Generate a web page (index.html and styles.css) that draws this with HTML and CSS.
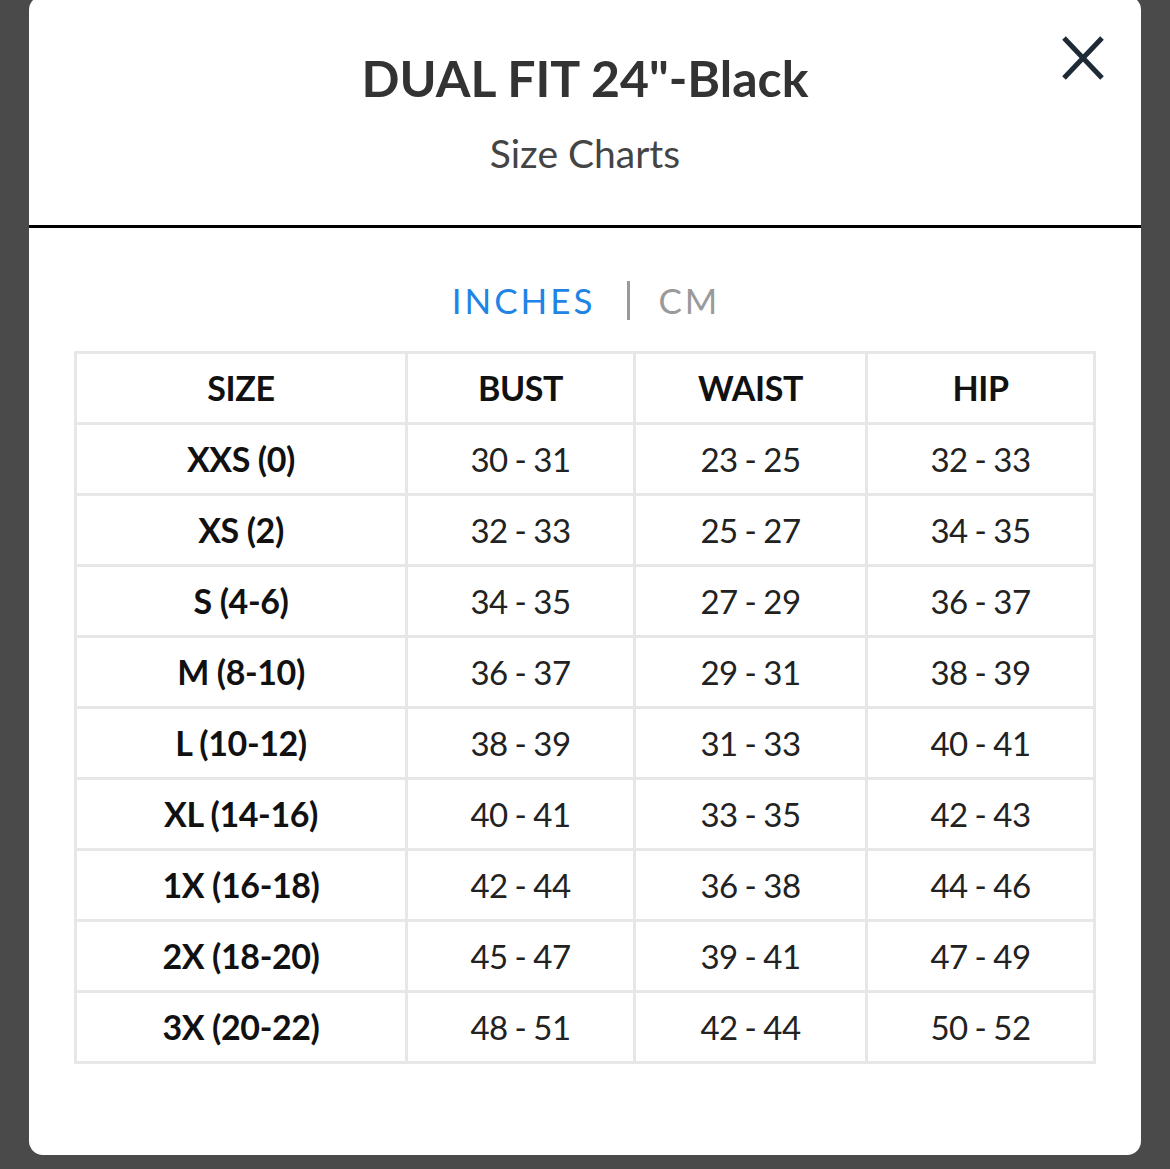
FILE: index.html
```html
<!DOCTYPE html>
<html lang="en">
<head>
<meta charset="utf-8">
<title>Size Charts</title>
<link rel="stylesheet" href="styles.css">
</head>
<body>
<div class="modal">
  <button class="close" aria-label="Close">
    <svg width="42" height="44" viewBox="0 0 42 44"><path d="M2 2 L40 42 M40 2 L2 42" stroke="#1f2a37" stroke-width="5" fill="none"/></svg>
  </button>
  <header class="modal-head">
    <h1 class="title">DUAL FIT 24"-Black</h1>
    <p class="subtitle">Size Charts</p>
  </header>
  <div class="modal-body">
    <div class="units">
      <span class="unit active">INCHES</span>
      <span class="sep"></span>
      <span class="unit">CM</span>
    </div>
    <table class="chart">
      <colgroup>
        <col class="c-size"><col class="c-bust"><col class="c-waist"><col class="c-hip">
      </colgroup>
      <thead>
        <tr><th>SIZE</th><th>BUST</th><th>WAIST</th><th>HIP</th></tr>
      </thead>
      <tbody>
        <tr><th>XXS (0)</th><td>30 - 31</td><td>23 - 25</td><td>32 - 33</td></tr>
        <tr><th>XS (2)</th><td>32 - 33</td><td>25 - 27</td><td>34 - 35</td></tr>
        <tr><th>S (4-6)</th><td>34 - 35</td><td>27 - 29</td><td>36 - 37</td></tr>
        <tr><th>M (8-10)</th><td>36 - 37</td><td>29 - 31</td><td>38 - 39</td></tr>
        <tr><th>L (10-12)</th><td>38 - 39</td><td>31 - 33</td><td>40 - 41</td></tr>
        <tr><th>XL (14-16)</th><td>40 - 41</td><td>33 - 35</td><td>42 - 43</td></tr>
        <tr><th>1X (16-18)</th><td>42 - 44</td><td>36 - 38</td><td>44 - 46</td></tr>
        <tr><th>2X (18-20)</th><td>45 - 47</td><td>39 - 41</td><td>47 - 49</td></tr>
        <tr><th>3X (20-22)</th><td>48 - 51</td><td>42 - 44</td><td>50 - 52</td></tr>
      </tbody>
    </table>
  </div>
</div>
</body>
</html>
```

FILE: styles.css
```css
html, body {
  margin: 0;
  padding: 0;
  background: #4a4a4a;
  height: 1169px;
  overflow: hidden;
}
body {
  font-family: Lato, "Open Sans", sans-serif;
}
.modal {
  position: relative;
  box-sizing: border-box;
  width: 1112px;
  height: 1159px;
  margin: -4px 0 0 29px;
  background: #fff;
  border-radius: 14px;
}
.close {
  position: absolute;
  top: 40px;
  right: 37px;
  padding: 0;
  border: 0;
  background: none;
  line-height: 0;
}
.modal-head {
  padding: 53px 0 48px;
  border-bottom: 3px solid #000;
  text-align: center;
}
.title {
  margin: 0;
  font-size: 50px;
  line-height: 58px;
  font-weight: 700;
  color: #333;
}
.subtitle {
  margin: 22px 0 0;
  font-size: 39px;
  line-height: 48px;
  font-weight: 400;
  color: #444;
}
.modal-body {
  padding: 52px 45px 0;
}
.units {
  display: flex;
  justify-content: center;
  align-items: center;
  height: 40px;
  margin-left: 2px;
}
.unit {
  font-size: 35px;
  line-height: 40px;
  letter-spacing: 3px;
  color: #9a9a9a;
}
.unit.active {
  color: #1e84e6;
}
.sep {
  width: 3px;
  height: 39px;
  background: #999;
  margin: 0 28px 0 32px;
}
.chart {
  margin-top: 31px;
  width: 1022px;
  border-collapse: collapse;
  table-layout: fixed;
  border: 3px solid #e6e7e9;
}
.c-size { width: 331px; }
.c-bust { width: 228px; }
.c-waist { width: 232px; }
.c-hip { width: 228px; }
.chart th, .chart td {
  height: 68px;
  padding: 0;
  border: 3px solid #e6e7e9;
  text-align: center;
  vertical-align: middle;
  font-size: 34px;
  line-height: 40px;
}
.chart th {
  font-weight: 700;
  color: #111;
  letter-spacing: -0.4px;
}
.chart td {
  font-size: 33px;
  font-weight: 400;
  color: #222;
  letter-spacing: -0.5px;
  word-spacing: -1px;
}
```
